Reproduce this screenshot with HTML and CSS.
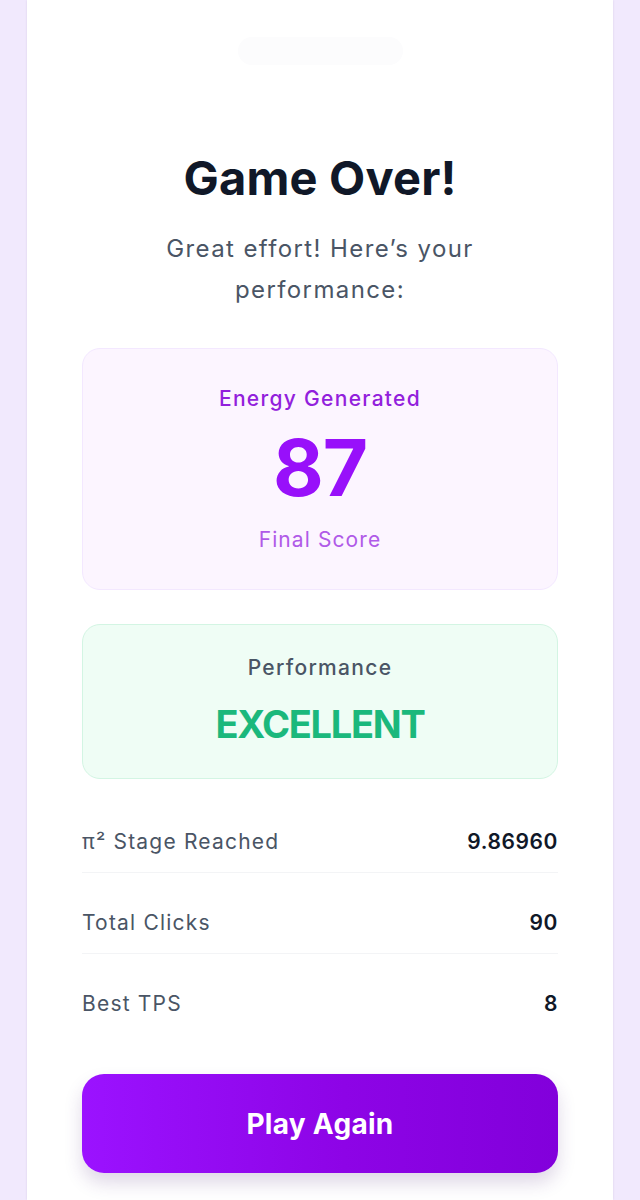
FILE: index.html
```html
<!DOCTYPE html>
<html lang="en">
<head>
<meta charset="utf-8">
<title>Game Over</title>
<link rel="stylesheet" href="styles.css">
</head>
<body>
<div class="page">
  <main class="card">
    <div class="ghost"></div>
    <h1 class="title">Game Over!</h1>
    <p class="subtitle">Great effort! Here’s your<br>performance:</p>

    <section class="score">
      <div class="score-label">Energy Generated</div>
      <div class="score-value">87</div>
      <div class="score-sub">Final Score</div>
    </section>

    <section class="perf">
      <div class="perf-label">Performance</div>
      <div class="perf-value">EXCELLENT</div>
    </section>

    <section class="stats">
      <div class="row"><span class="k">π² Stage Reached</span><span class="v">9.86960</span></div>
      <div class="row"><span class="k">Total Clicks</span><span class="v">90</span></div>
      <div class="row"><span class="k">Best TPS</span><span class="v">8</span></div>
    </section>

    <button class="play">Play Again</button>
  </main>
</div>
</body>
</html>
```
FILE: styles.css
```css
* { box-sizing: border-box; }
html, body { margin: 0; padding: 0; }
body {
  background: #f1e9fd;
  font-family: Inter, "Noto Sans", "DejaVu Sans", sans-serif;
  color: #101828;
}
.page {
  padding: 0 27px;
  height: 1200px;
  overflow: hidden;
}
.card {
  background: #ffffff;
  min-height: 1200px;
  padding: 37px 55px 0;
  box-shadow: 0 0 2px rgba(60, 40, 90, 0.12);
  display: flex;
  flex-direction: column;
}
.ghost {
  align-self: center;
  width: 165px;
  height: 28px;
  border-radius: 14px;
  background: #fcfcfd;
}
.title {
  margin: 85px 0 0;
  font-size: 47px;
  line-height: 56px;
  font-weight: 700;
  text-align: center;
  color: #101828;
  letter-spacing: 0.2px;
}
.subtitle {
  margin: 22px 0 0;
  font-size: 24px;
  line-height: 41px;
  text-align: center;
  color: #4a5565;
  font-weight: 400;
  letter-spacing: 1.4px;
}
.score {
  margin-top: 38px;
  background: #fcf5ff;
  border: 1px solid #f3e8ff;
  border-radius: 18px;
  padding: 36px 0 35px;
  text-align: center;
}
.score-label {
  font-size: 21px;
  line-height: 28px;
  font-weight: 500;
  color: #9220dc;
  letter-spacing: 1.3px;
}
.score-value {
  margin-top: 13px;
  font-size: 78px;
  line-height: 84px;
  font-weight: 700;
  color: #9810fa;
  letter-spacing: -1px;
}
.score-sub {
  margin-top: 16px;
  font-size: 21px;
  line-height: 28px;
  color: #b05ae8;
  letter-spacing: 1.1px;
}
.perf {
  margin-top: 34px;
  background: #effdf5;
  border: 1px solid #d3f5e3;
  border-radius: 18px;
  padding: 29px 0 30px;
  text-align: center;
}
.perf-label {
  font-size: 21px;
  line-height: 28px;
  color: #4a5565;
  font-weight: 500;
  letter-spacing: 1.3px;
}
.perf-value {
  margin-top: 18px;
  font-size: 38px;
  line-height: 48px;
  font-weight: 700;
  color: #1bb87c;
  letter-spacing: -1.3px;
}
.stats {
  margin-top: 33px;
  display: flex;
  flex-direction: column;
  gap: 20px;
}
.row {
  display: flex;
  justify-content: space-between;
  align-items: center;
  padding: 16px 0;
  border-bottom: 1px solid #f3f4f6;
  font-size: 21px;
  line-height: 28px;
}
.row:last-child { border-bottom: none; }
.k { color: #4a5565; letter-spacing: 1.2px; }
.v { color: #101828; font-weight: 600; letter-spacing: 0.6px; }
.play {
  margin-top: 40px;
  height: 99px;
  border: none;
  border-radius: 22px;
  background: linear-gradient(90deg, #9b12ff 0%, #8d04e6 55%, #8200db 100%);
  color: #ffffff;
  font-family: inherit;
  font-size: 28px;
  font-weight: 700;
  letter-spacing: 0.3px;
  box-shadow: 0 10px 18px rgba(80, 40, 120, 0.18);
}
```
